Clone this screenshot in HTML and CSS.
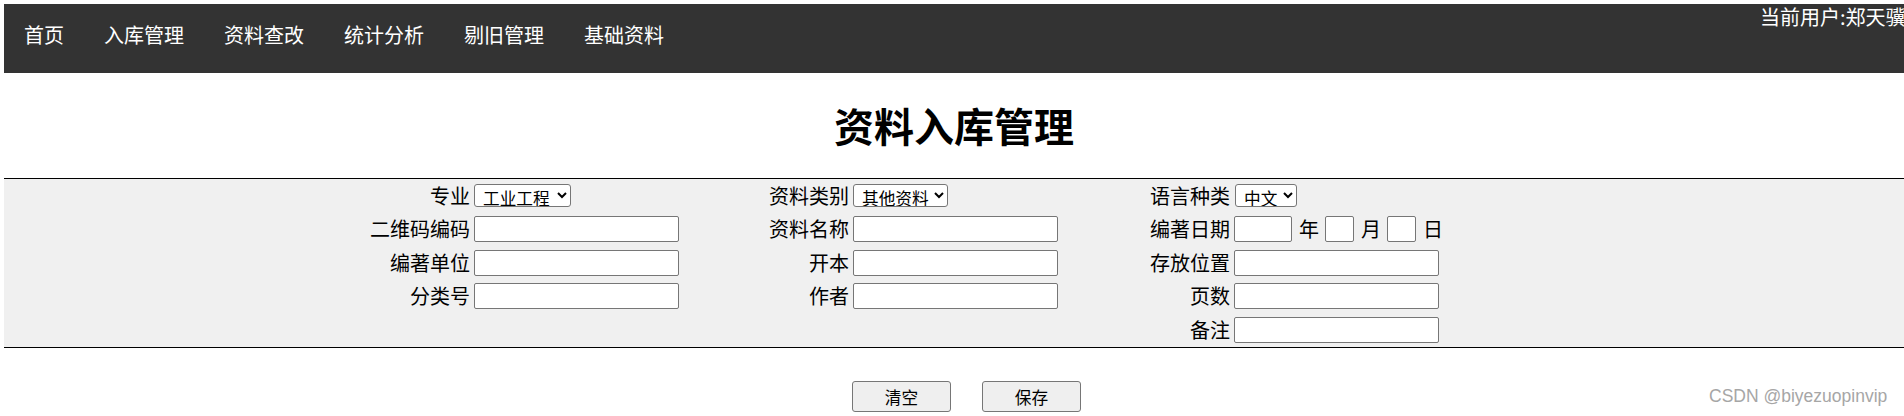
FILE: index.html
```html
<!DOCTYPE html>
<html lang="zh-CN">
<head>
<meta charset="utf-8">
<title>资料入库管理</title>
<link rel="stylesheet" href="styles.css">
</head>
<body>
<nav class="topnav">
  <ul class="menu">
    <li class="menu-item">首页</li>
    <li class="menu-item">入库管理</li>
    <li class="menu-item">资料查改</li>
    <li class="menu-item">统计分析</li>
    <li class="menu-item">剔旧管理</li>
    <li class="menu-item">基础资料</li>
  </ul>
  <div class="user">当前用户:郑天骥</div>
</nav>

<h1 class="page-title">资料入库管理</h1>

<section class="form-panel">
  <div class="form-grid">
    <label class="lbl">专业</label>
    <div class="cell"><select class="sel sel-major"><option>工业工程</option></select></div>
    <label class="lbl">资料类别</label>
    <div class="cell"><select class="sel sel-type"><option>其他资料</option></select></div>
    <label class="lbl">语言种类</label>
    <div class="cell"><select class="sel sel-lang"><option>中文</option></select></div>

    <label class="lbl">二维码编码</label>
    <div class="cell"><input class="txt" type="text"></div>
    <label class="lbl">资料名称</label>
    <div class="cell"><input class="txt" type="text"></div>
    <label class="lbl">编著日期</label>
    <div class="cell date">
      <input class="txt txt-year" type="text"><span class="unit">年</span>
      <input class="txt txt-small" type="text"><span class="unit">月</span>
      <input class="txt txt-small" type="text"><span class="unit">日</span>
    </div>

    <label class="lbl">编著单位</label>
    <div class="cell"><input class="txt" type="text"></div>
    <label class="lbl">开本</label>
    <div class="cell"><input class="txt" type="text"></div>
    <label class="lbl">存放位置</label>
    <div class="cell"><input class="txt" type="text"></div>

    <label class="lbl">分类号</label>
    <div class="cell"><input class="txt" type="text"></div>
    <label class="lbl">作者</label>
    <div class="cell"><input class="txt" type="text"></div>
    <label class="lbl">页数</label>
    <div class="cell"><input class="txt" type="text"></div>

    <label class="lbl col-third">备注</label>
    <div class="cell"><input class="txt" type="text"></div>
  </div>
</section>

<div class="actions">
  <button class="btn" type="button">清空</button>
  <button class="btn" type="button">保存</button>
</div>

<div class="watermark">CSDN @biyezuopinvip</div>
</body>
</html>
```

FILE: styles.css
```css
html, body {
  background: #ffffff;
}

body {
  margin: 4px 0 0 4px;
  font-family: "Noto Sans CJK SC", "Noto Sans", sans-serif;
  color: #000000;
}

/* ---------- top navigation ---------- */
.topnav {
  display: flex;
  align-items: flex-start;
  height: 69px;
  background: #333333;
  color: #ffffff;
  overflow: hidden;
}

.menu {
  display: flex;
  list-style: none;
  margin: 0;
  padding: 0;
}

.menu-item {
  padding: 17px 20px 0;
  font-size: 20px;
  line-height: 28px;
  white-space: nowrap;
}

.user {
  margin-left: auto;
  width: 144px;
  flex: none;
  font-size: 20px;
  line-height: 26px;
  white-space: nowrap;
}

/* ---------- title ---------- */
.page-title {
  margin: 25px 0 26px;
  font-size: 40px;
  line-height: 54px;
  font-weight: 700;
  text-align: center;
}

/* ---------- form panel ---------- */
.form-panel {
  background: #f0f0f0;
  border-top: 1px solid #000000;
  border-bottom: 1px solid #000000;
  padding: 3.5px 0 4.5px;
}

.form-grid {
  display: grid;
  grid-template-columns: 104px 205px 174px 205px 176px auto;
  grid-auto-rows: 26px;
  row-gap: 7.5px;
  margin-left: 366px;
  width: max-content;
}

.lbl {
  display: flex;
  align-items: center;
  justify-content: flex-end;
  padding-right: 4px;
  font-size: 20px;
  line-height: 26px;
  white-space: nowrap;
}

.col-third {
  grid-column-start: 5;
}

.cell {
  display: flex;
  align-items: center;
}

.txt {
  box-sizing: border-box;
  width: 205px;
  height: 26px;
  margin: 0;
  padding: 1px 3px;
  border: 1px solid #767676;
  border-radius: 2px;
  background: #ffffff;
  font-family: "Noto Sans CJK SC", sans-serif;
  font-size: 16.67px;
}

.txt-year {
  width: 58px;
}

.txt-small {
  width: 29px;
}

.unit {
  margin: 0 6px 0 7px;
  font-size: 20px;
  line-height: 26px;
}

.date .unit:last-child {
  margin-right: 0;
}

.sel {
  box-sizing: border-box;
  height: 23px;
  margin: 0;
  padding: 0 0 0 4px;
  border: 1px solid #767676;
  border-radius: 3px;
  background-color: #ffffff;
  color: #000000;
  font-family: "Noto Sans CJK SC", sans-serif;
  font-size: 16.67px;
  line-height: 21px;
}

.sel-major {
  width: 97px;
}

.sel-type {
  width: 95px;
}

.sel-lang {
  width: 62px;
  margin-left: 1px;
}

/* ---------- buttons ---------- */
.actions {
  display: flex;
  justify-content: center;
  gap: 31px;
  margin-top: 33px;
  padding-left: 25px;
}

.btn {
  box-sizing: border-box;
  width: 99px;
  height: 31px;
  margin: 0;
  padding: 0;
  border: 1px solid #767676;
  border-radius: 3px;
  background: #efefef;
  color: #000000;
  font-family: "Noto Sans CJK SC", sans-serif;
  font-size: 16.67px;
}

/* ---------- watermark overlay ---------- */
.watermark {
  position: absolute;
  left: 1709px;
  top: 386px;
  font-family: "Liberation Sans", Arial, sans-serif;
  font-size: 17.5px;
  line-height: 20px;
  color: #a6a6a6;
  white-space: nowrap;
}
```
